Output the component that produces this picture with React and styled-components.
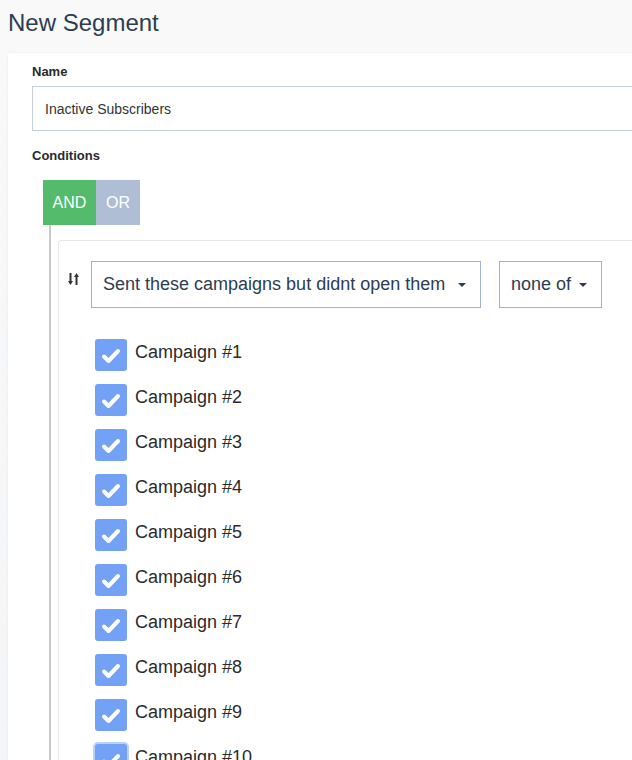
import React, { useState } from "react";
import styled, { createGlobalStyle } from "styled-components";

const GlobalStyle = createGlobalStyle`
  html, body {
    margin: 0;
    padding: 0;
    background: #f6f7f8;
    overflow: hidden;
  }
  body {
    font-family: "Liberation Sans", Arial, sans-serif;
  }
`;

const Page = styled.div`
  width: 632px;
  height: 760px;
  overflow: hidden;
  background: linear-gradient(180deg, #f9f9fa 0%, #f4f5f6 100%);
`;

const Title = styled.h1`
  margin: 0;
  padding: 7px 8px 0;
  font-size: 24px;
  line-height: 32px;
  font-weight: 400;
  color: #2c3e50;
`;

const Card = styled.div`
  margin: 14px 0 0 8px;
  width: 700px;
  min-height: 720px;
  background: #fff;
  border-radius: 3px;
  box-shadow: 0 0 3px rgba(0, 0, 0, 0.06);
  padding: 11px 24px 0;
  box-sizing: border-box;
`;

const Label = styled.div`
  font-size: 13px;
  line-height: 16px;
  font-weight: 700;
  color: #2a2a2a;
  margin-top: ${(p) => p.$top || 0}px;
`;

const TextInput = styled.input`
  display: block;
  box-sizing: border-box;
  width: 640px;
  height: 45px;
  margin-top: 6px;
  padding: 0 12px;
  border: 1px solid #c6cddb;
  border-radius: 0;
  font-family: inherit;
  font-size: 14px;
  color: #333;
  outline: none;
`;

const ToggleGroup = styled.div`
  display: flex;
  margin: 16px 0 0 11px;
`;

const Toggle = styled.button`
  height: 45px;
  width: ${(p) => p.$width}px;
  border: none;
  padding: 0;
  font-family: inherit;
  font-size: 16px;
  color: #fff;
  background: ${(p) => (p.$active ? "#54bb6c" : "#afbdd5")};
  cursor: pointer;
`;

const Branch = styled.div`
  margin-left: 17px;
  padding: 15px 0 0 7px;
  border-left: 2px solid #cacaca;
  min-height: 600px;
`;

const ConditionCard = styled.div`
  border: 1px solid #e7e7e7;
  border-right: none;
  border-radius: 4px 0 0 4px;
  padding: 20px 0 0 9px;
  min-height: 560px;
`;

const SelectRow = styled.div`
  display: flex;
  align-items: flex-start;
  gap: 18px;
`;

const SortHandle = styled.div`
  width: 14px;
  padding-top: 11px;
  margin-right: -9px;
  color: #333;
`;

const Select = styled.div`
  box-sizing: border-box;
  width: ${(p) => p.$width}px;
  height: 47px;
  border: 1px solid #a3b2cc;
  padding: 0 14px 0 11px;
  display: flex;
  align-items: center;
  justify-content: space-between;
  font-size: 18px;
  color: #2c3e50;
  white-space: nowrap;
`;

const Caret = styled.span`
  width: 0;
  height: 0;
  border-left: 4px solid transparent;
  border-right: 4px solid transparent;
  border-top: 4px solid #2c3e50;
`;

const CheckList = styled.div`
  margin: 31px 0 0 27px;
  display: flex;
  flex-direction: column;
  gap: 13px;
`;

const CheckRow = styled.label`
  display: flex;
  align-items: center;
  gap: 8px;
  height: 32px;
  font-size: 18px;
  color: #2b2b2b;
  cursor: pointer;
`;

const CheckText = styled.span`
  padding-bottom: 6px;
`;

const Box = styled.span`
  width: 32px;
  height: 32px;
  border-radius: 3px;
  background: #73a1f6;
  display: flex;
  align-items: center;
  justify-content: center;
  box-shadow: ${(p) => (p.$focus ? "0 0 0 2px #b9d2fb" : "none")};
`;

const SortIcon = () => (
  <svg width="12" height="14" viewBox="0 0 12 14">
    <path d="M2.5 1v9" stroke="currentColor" strokeWidth="2" />
    <path d="M0 9l2.5 4 2.5-4z" fill="currentColor" />
    <path d="M8.5 13V4" stroke="currentColor" strokeWidth="2" />
    <path d="M6 5l2.5-4 2.5 4z" fill="currentColor" />
  </svg>
);

const Check = () => (
  <svg width="20" height="18" viewBox="0 0 20 18">
    <path
      d="M3 10.5l4.5 4.5L17 5"
      fill="none"
      stroke="#fff"
      strokeWidth="4"
      strokeLinecap="round"
      strokeLinejoin="round"
    />
  </svg>
);

const campaigns = Array.from({ length: 10 }, (_, i) => `Campaign #${i + 1}`);

export default function App() {
  const [mode, setMode] = useState("AND");

  return (
    <Page>
      <GlobalStyle />
      <Title>New Segment</Title>
      <Card>
        <Label>Name</Label>
        <TextInput defaultValue="Inactive Subscribers" />
        <Label $top={17}>Conditions</Label>
        <ToggleGroup>
          <Toggle $width={53} $active={mode === "AND"} onClick={() => setMode("AND")}>
            AND
          </Toggle>
          <Toggle $width={44} $active={mode === "OR"} onClick={() => setMode("OR")}>
            OR
          </Toggle>
        </ToggleGroup>
        <Branch>
          <ConditionCard>
            <SelectRow>
              <SortHandle>
                <SortIcon />
              </SortHandle>
              <Select $width={390}>
                Sent these campaigns but didnt open them
                <Caret />
              </Select>
              <Select $width={103}>
                none of
                <Caret />
              </Select>
            </SelectRow>
            <CheckList>
              {campaigns.map((name, i) => (
                <CheckRow key={name}>
                  <Box $focus={i === 9}>
                    <Check />
                  </Box>
                  <CheckText>{name}</CheckText>
                </CheckRow>
              ))}
            </CheckList>
          </ConditionCard>
        </Branch>
      </Card>
    </Page>
  );
}
